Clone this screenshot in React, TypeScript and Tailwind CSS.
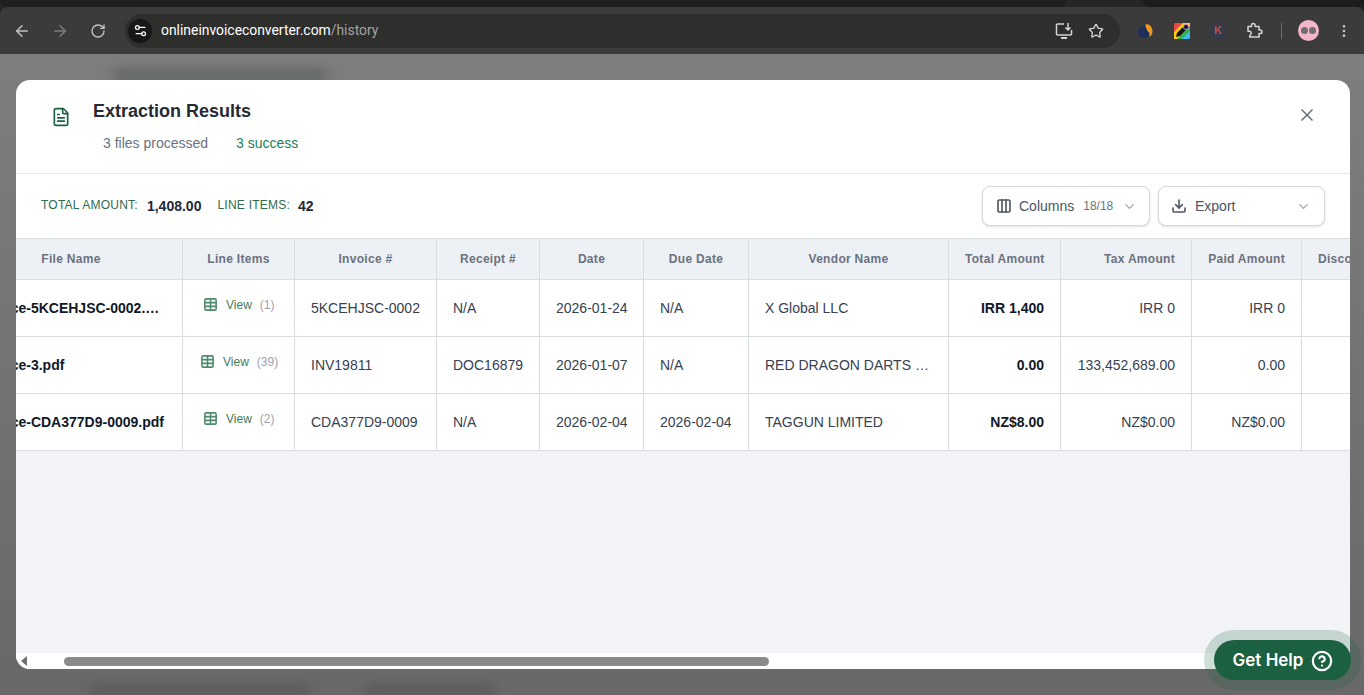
import { ArrowLeft, ArrowRight, ChevronDown, CircleHelp, Columns3, Download, EllipsisVertical, FileText, RotateCw, Settings2, Star, Table, X } from 'lucide-react';

const rows = [
    { file: 'Invoice-5KCEHJSC-0002.pdf', count: 1, pad: 'pl-[20px]', invoice: '5KCEHJSC-0002', receipt: 'N/A', date: '2026-01-24', due: 'N/A', vendor: 'X Global LLC', total: 'IRR 1,400', tax: 'IRR 0', paid: 'IRR 0' },
    { file: 'Invoice-3.pdf', count: 39, pad: 'pl-[17px]', invoice: 'INV19811', receipt: 'DOC16879', date: '2026-01-07', due: 'N/A', vendor: 'RED DRAGON DARTS LIMITED', total: '0.00', tax: '133,452,689.00', paid: '0.00' },
    { file: 'Invoice-CDA377D9-0009.pdf', count: 2, pad: 'pl-[20px]', invoice: 'CDA377D9-0009', receipt: 'N/A', date: '2026-02-04', due: '2026-02-04', vendor: 'TAGGUN LIMITED', total: 'NZ$8.00', tax: 'NZ$0.00', paid: 'NZ$0.00' },
];

const th = 'h-[42px] border-r border-b border-t border-[#d9dce1] px-4 text-[12px] font-bold tracking-wide whitespace-nowrap text-[#6b7280]';
const td = 'h-[57px] border-r border-b border-[#d9dce1] bg-white text-[14px] truncate';
const cell = td + ' px-4 text-[#374151]';
const tight = td + ' pl-4 pr-1 text-[#374151]';
const amount = td + ' px-4 text-right text-[#374151]';

function BrowserBar() {
    return (
        <div className="shrink-0 bg-[#262626]">
            <div className="flex h-[7px]">
                <div className="w-[1067px] rounded-b-lg bg-[#1e1e1e]" />
                <div className="ml-[76px] flex-1 rounded-bl-lg bg-[#1c1c1c]" />
            </div>
            <div className="flex h-[47px] items-center rounded-t-lg bg-[#3b3b3b] pl-[13px] pr-[12px]">
                <ArrowLeft className="h-[18px] w-[18px] text-[#c4c4c4]" />
                <ArrowRight className="ml-[20px] h-[18px] w-[18px] text-[#7c7c7c]" />
                <RotateCw className="ml-[21px] h-[16px] w-[16px] text-[#c4c4c4]" />
                <div className="ml-[19px] flex h-[34px] w-[995px] items-center rounded-full bg-[#2e2e2c] pl-[3px] pr-[16px]">
                    <div className="flex h-[24px] w-[24px] items-center justify-center rounded-full bg-[#171717]">
                        <Settings2 className="h-[15px] w-[15px] text-white" />
                    </div>
                    <span className="ml-[9px] font-['Roboto',sans-serif] text-[13.9px] text-white">
                        onlineinvoiceconverter.com<span className="text-[#a3a3a3]">/history</span>
                    </span>
                    <svg className="ml-auto h-[18px] w-[18px]" viewBox="0 0 18 18" fill="none" stroke="#d4d4d4" strokeWidth="1.5">
                        <path d="M9 2H2.5a1 1 0 0 0-1 1v9a1 1 0 0 0 1 1h13a1 1 0 0 0 1-1V8" />
                        <path d="M6 16h6" strokeWidth="2" />
                        <path d="M13 1v6.5M10.5 5.5L13 8l2.5-2.5" />
                    </svg>
                    <Star className="ml-[15px] h-[16px] w-[16px] text-[#d4d4d4]" />
                </div>
                <svg className="ml-[18px] h-[16px] w-[16px]" viewBox="0 0 16 16">
                    <circle cx="6" cy="9" r="6" fill="#1e2f5c" />
                    <path d="M8 1a7 7 0 0 1 3 13c2-4-1-5-2-7S7 3 8 1z" fill="#f29a1f" />
                </svg>
                <svg className="ml-[20px] h-[16px] w-[16px]" viewBox="0 0 16 16">
                    <rect width="16" height="16" rx="2" fill="#37b24d" />
                    <path d="M0 2a2 2 0 0 1 2-2h7L0 9z" fill="#ef4444" />
                    <path d="M0 16V9l9-9h7v3L3 16z" fill="#facc15" />
                    <path d="M16 8v6a2 2 0 0 1-2 2H8z" fill="#38bdf8" />
                    <path d="M2 14l1-4 6-6 3 3-6 6z" fill="#111" />
                    <circle cx="12" cy="4" r="2.5" fill="#111" stroke="#c084fc" />
                </svg>
                <div className="ml-[20px] flex h-[16px] w-[16px] items-center justify-center rounded-full bg-[#333a4a] text-[11px] font-bold text-[#b5534f]">K</div>
                <svg className="ml-[20px] h-[18px] w-[18px]" viewBox="0 0 18 18" fill="none" stroke="#d4d4d4" strokeWidth="1.5" strokeLinejoin="round">
                    <path d="M2 4.5h3.5V3.2a1.8 1.8 0 0 1 3.6 0v1.3H13V8h1.2a1.8 1.8 0 0 1 0 3.6H13V15H3.5l1-2.5a1.8 1.8 0 0 0-1-3.2H2z" />
                </svg>
                <div className="ml-[17px] h-[16px] w-px bg-[#6b6b6b]" />
                <div className="ml-[16px] flex h-[21px] w-[21px] items-center justify-center gap-px rounded-full bg-[#f4b6c8]">
                    <div className="h-[7px] w-[7px] rounded-full bg-[#6f6f6f]" />
                    <div className="h-[7px] w-[7px] rounded-full bg-[#6f6f6f]" />
                </div>
                <EllipsisVertical className="ml-[17px] h-[16px] w-[16px] text-[#c4c4c4]" />
            </div>
        </div>
    );
}

function App() {
    return (
        <div className="relative flex h-[695px] w-[1364px] flex-col overflow-hidden bg-linear-to-b from-[#808080] to-[#686868] font-['Liberation_Sans',sans-serif]">
            <BrowserBar />

            {/* Page behind the overlay */}
            <div className="absolute top-[70px] left-[112px] h-[10px] w-[216px] rounded bg-[#5c625f] blur-[6px]" />
            <div className="absolute top-[686px] left-[90px] h-[8px] w-[220px] rounded bg-[#555555] blur-[6px]" />
            <div className="absolute top-[686px] left-[365px] h-[8px] w-[130px] rounded bg-[#555555] blur-[6px]" />

            <div className="relative flex-1 pt-[26px] pl-[16px]">
                <div className="flex h-[589px] w-[1334px] flex-col overflow-hidden rounded-[14px] bg-white">
                    {/* Header */}
                    <div className="flex h-[94px] shrink-0 border-b border-[#e5e7eb] pl-[35px] pr-[33px]">
                        <FileText className="mt-[27px] h-[20px] w-[20px] text-[#1a6041]" />
                        <div className="ml-[22px] pt-[20px]">
                            <h2 className="text-[18px] leading-[22px] font-bold text-[#262b33]">Extraction Results</h2>
                            <div className="mt-[11px] flex gap-[28px] pl-[10px] text-[14px] leading-[20px]">
                                <span className="text-[#6b7280]">3 files processed</span>
                                <span className="text-[#1a7f5a]">3 success</span>
                            </div>
                        </div>
                        <X className="mt-[25px] ml-auto h-[20px] w-[20px] text-[#6b7280]" />
                    </div>

                    {/* Totals and actions */}
                    <div className="flex h-[64px] shrink-0 items-center pl-[25px] pr-[25px]">
                        <span className="mb-[2px] text-[12px] tracking-[0.02em] text-[#2e6b4f]">TOTAL AMOUNT:</span>
                        <span className="ml-[9px] mt-px text-[14px] font-bold text-[#1f2937]">1,408.00</span>
                        <span className="mb-[2px] ml-[16px] text-[12px] tracking-[0.02em] text-[#2e6b4f]">LINE ITEMS:</span>
                        <span className="ml-[8px] mt-px text-[14px] font-bold text-[#1f2937]">42</span>
                        <button className="ml-auto flex h-[40px] w-[168px] items-center rounded-lg border border-[#d5d8dd] bg-white pl-[13px] text-[14px] text-[#4b5563] shadow-sm">
                            <Columns3 className="h-[16px] w-[16px]" strokeWidth={2.4} />
                            <span className="ml-[7px]">Columns</span>
                            <span className="ml-[9px] text-[12px] text-[#6b7280]">18/18</span>
                            <ChevronDown className="ml-[9px] h-[15px] w-[15px] text-[#9ca3af]" />
                        </button>
                        <button className="ml-[8px] flex h-[40px] w-[167px] items-center rounded-lg border border-[#d5d8dd] bg-white pl-[12px] text-[14px] text-[#4b5563] shadow-sm">
                            <Download className="h-[16px] w-[16px]" strokeWidth={2.4} />
                            <span className="ml-[8px]">Export</span>
                            <ChevronDown className="ml-auto mr-[13px] h-[15px] w-[15px] text-[#9ca3af]" />
                        </button>
                    </div>

                    {/* Results table, scrolled sideways */}
                    <div className="min-h-0 flex-1 overflow-hidden bg-[#f1f3f6]">
                        <table className="ml-[-56px] w-[1500px] table-fixed border-separate border-spacing-0">
                            <colgroup>
                                <col className="w-[223px]" />
                                <col className="w-[112px]" />
                                <col className="w-[142px]" />
                                <col className="w-[103px]" />
                                <col className="w-[104px]" />
                                <col className="w-[105px]" />
                                <col className="w-[200px]" />
                                <col className="w-[112px]" />
                                <col className="w-[131px]" />
                                <col className="w-[110px]" />
                                <col className="w-[158px]" />
                            </colgroup>
                            <thead>
                                <tr className="bg-[#edf0f4]">
                                    <th className={th + ' text-center'}>File Name</th>
                                    <th className={th + ' text-center'}>Line Items</th>
                                    <th className={th + ' text-center'}>Invoice #</th>
                                    <th className={th + ' text-center'}>Receipt #</th>
                                    <th className={th + ' text-center'}>Date</th>
                                    <th className={th + ' text-center'}>Due Date</th>
                                    <th className={th + ' text-center'}>Vendor Name</th>
                                    <th className={th + ' text-right'}>Total Amount</th>
                                    <th className={th + ' text-right'}>Tax Amount</th>
                                    <th className={th + ' text-right'}>Paid Amount</th>
                                    <th className={th + ' text-left'}>Discount</th>
                                </tr>
                            </thead>
                            <tbody>
                                {rows.map(row => (
                                    <tr key={row.file}>
                                        <td className={td + ' pl-[18px] pr-4 font-bold text-[#111827]'}>{row.file}</td>
                                        <td className={td}>
                                            <div className={'mb-[7px] flex items-center text-[12px] ' + row.pad}>
                                                <Table className="h-[15px] w-[15px] text-[#4f8a6e]" strokeWidth={2.5} />
                                                <span className="ml-[8px] text-[#3f7a5f]">View</span>
                                                <span className="ml-[8px] text-[#9ca3af]">({row.count})</span>
                                            </div>
                                        </td>
                                        <td className={cell}>{row.invoice}</td>
                                        <td className={tight}>{row.receipt}</td>
                                        <td className={tight}>{row.date}</td>
                                        <td className={tight}>{row.due}</td>
                                        <td className={cell}>{row.vendor}</td>
                                        <td className={td + ' px-4 text-right font-bold text-[#111827]'}>{row.total}</td>
                                        <td className={amount}>{row.tax}</td>
                                        <td className={amount}>{row.paid}</td>
                                        <td className={cell} />
                                    </tr>
                                ))}
                            </tbody>
                        </table>
                    </div>

                    {/* Scrollbar */}
                    <div className="flex h-[16px] shrink-0 items-center bg-white pl-[5px]">
                        <div className="h-0 w-0 border-y-[5px] border-r-[6px] border-y-transparent border-r-[#6f6f6f]" />
                        <div className="ml-[37px] h-[9px] w-[705px] rounded-full bg-[#8a8a8a]" />
                    </div>
                </div>
            </div>

            {/* Get Help */}
            <button className="absolute top-[640px] left-[1214px] flex h-[40px] w-[137px] items-center justify-center gap-[8px] rounded-full bg-[#1a6041] pt-px pl-px font-['Inter',sans-serif] text-[17px] font-semibold text-white shadow-[0_0_0_10px_rgba(26,96,65,0.2)]">
                Get Help
                <CircleHelp className="h-[22px] w-[22px]" strokeWidth={2.4} />
            </button>
        </div>
    );
}

export default App;
